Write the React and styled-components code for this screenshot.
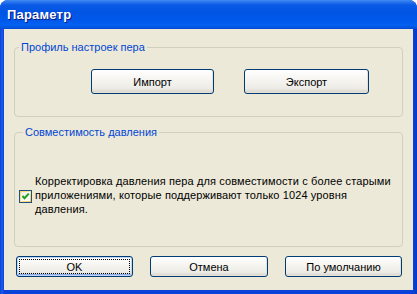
import React from "react";
import styled, { createGlobalStyle } from "styled-components";

const Global = createGlobalStyle`
  html, body { margin: 0; padding: 0; background: #ffffff; }
  body { font-family: "Liberation Sans", Arial, sans-serif; font-size: 11px; }
`;

const Window = styled.div`
  width: 417px;
  height: 294px;
  box-sizing: border-box;
  display: flex;
  flex-direction: column;
  border-radius: 8px 8px 0 0;
  overflow: hidden;
  background: linear-gradient(90deg, #0a3fd0 0px, #1a5cf0 2px, #0842d8 4px, #0842d8 calc(100% - 4px), #0638c4 100%);
`;

const TitleBar = styled.div`
  height: 29px;
  flex: none;
  display: flex;
  align-items: center;
  padding: 0 7px;
  background: linear-gradient(180deg, #3f8cf3 0px, #2a74ec 2px, #0a5ae6 5px, #0154e3 12px, #0058ea 20px, #0361f0 25px, #0553dd 28px, #0447c8 29px);
  color: #ffffff;
  font-family: "Liberation Sans", Arial, sans-serif;
  font-weight: bold;
  font-size: 13px;
  text-shadow: 1px 1px 0 #0a1883;
  letter-spacing: 0.2px;
`;

const Client = styled.div`
  flex: 1;
  margin: 0 4px 4px 4px;
  background: #ece9d8;
  display: flex;
  flex-direction: column;
  padding: 12px 10px 0 10px;
  gap: 9px;
`;

const Group = styled.fieldset`
  margin: 0;
  border: 1px solid #d0d0bf;
  border-radius: 4px;
  padding: ${p => p.$pad};
  min-height: 0;
`;

const Legend = styled.legend`
  color: #0046d5;
  padding: 0 2px;
  margin-left: 4px;
  font-size: 11px;
  line-height: 13px;
`;

const ButtonRow = styled.div`
  display: flex;
  gap: ${p => p.$gap}px;
  padding-left: ${p => p.$indent}px;
`;

const Button = styled.button`
  width: ${p => p.$w}px;
  height: ${p => p.$h}px;
  box-sizing: border-box;
  font-family: "Liberation Sans", Arial, sans-serif;
  font-size: 11px;
  color: #000;
  border: 1px solid #003c74;
  border-radius: 3px;
  background: linear-gradient(180deg, #ffffff 0%, #f6f5f1 40%, #ecebe5 80%, #d8d3c8 100%);
  box-shadow: ${p => p.$default ? "inset 0 0 0 1px #bcd4f6, inset 0 -1px 0 1px #89adec" : "inset -1px -1px 0 #e3e1d8"};
  padding: 0;
  position: relative;
  outline: ${p => p.$default ? "1px dotted #000" : "none"};
  outline-offset: -4px;
`;

const CheckRow = styled.div`
  display: flex;
  align-items: center;
  gap: 3px;
`;

const Box = styled.span`
  width: 13px;
  height: 13px;
  box-sizing: border-box;
  flex: none;
  border: 1px solid #1c5180;
  background: linear-gradient(135deg, #f8d06a 0%, #fbe49a 50%, #f5c650 100%);
  display: flex;
  align-items: center;
  justify-content: center;
  margin-top: 2px;
`;

const BoxInner = styled.span`
  width: 9px;
  height: 9px;
  background: linear-gradient(135deg, #f1efe2 0%, #ffffff 100%);
  display: flex;
  align-items: center;
  justify-content: center;
`;

const Label = styled.div`
  color: #000;
  line-height: 14px;
  letter-spacing: 0.12px;
`;

const BottomRow = styled.div`
  display: flex;
  padding: 0 1px 0 2px;
  justify-content: space-between;
`;

export default function App() {
  return (
    <>
      <Global />
      <Window>
        <TitleBar>Параметр</TitleBar>
        <Client>
          <Group $pad="15px 0 22px 0">
            <Legend>Профиль настроек пера</Legend>
            <ButtonRow $gap={30} $indent={76}>
              <Button $w={123} $h={25}>Импорт</Button>
              <Button $w={125} $h={25}>Экспорт</Button>
            </ButtonRow>
          </Group>
          <Group $pad="35px 10px 30px 4px">
            <Legend>Совместимость давления</Legend>
            <CheckRow>
              <Box>
                <BoxInner>
                  <svg width="9" height="9" viewBox="0 0 9 9">
                    <path d="M1.5 4 L3.5 6.2 L7.8 1.6" stroke="#21a121" strokeWidth="2" fill="none" />
                  </svg>
                </BoxInner>
              </Box>
              <Label>
                Корректировка давления пера для совместимости с более старыми<br />
                приложениями, которые поддерживают только 1024 уровня<br />
                давления.
              </Label>
            </CheckRow>
          </Group>
          <BottomRow>
            <Button $w={117} $h={21} $default>OK</Button>
            <Button $w={118} $h={21}>Отмена</Button>
            <Button $w={117} $h={21}>По умолчанию</Button>
          </BottomRow>
        </Client>
      </Window>
    </>
  );
}
